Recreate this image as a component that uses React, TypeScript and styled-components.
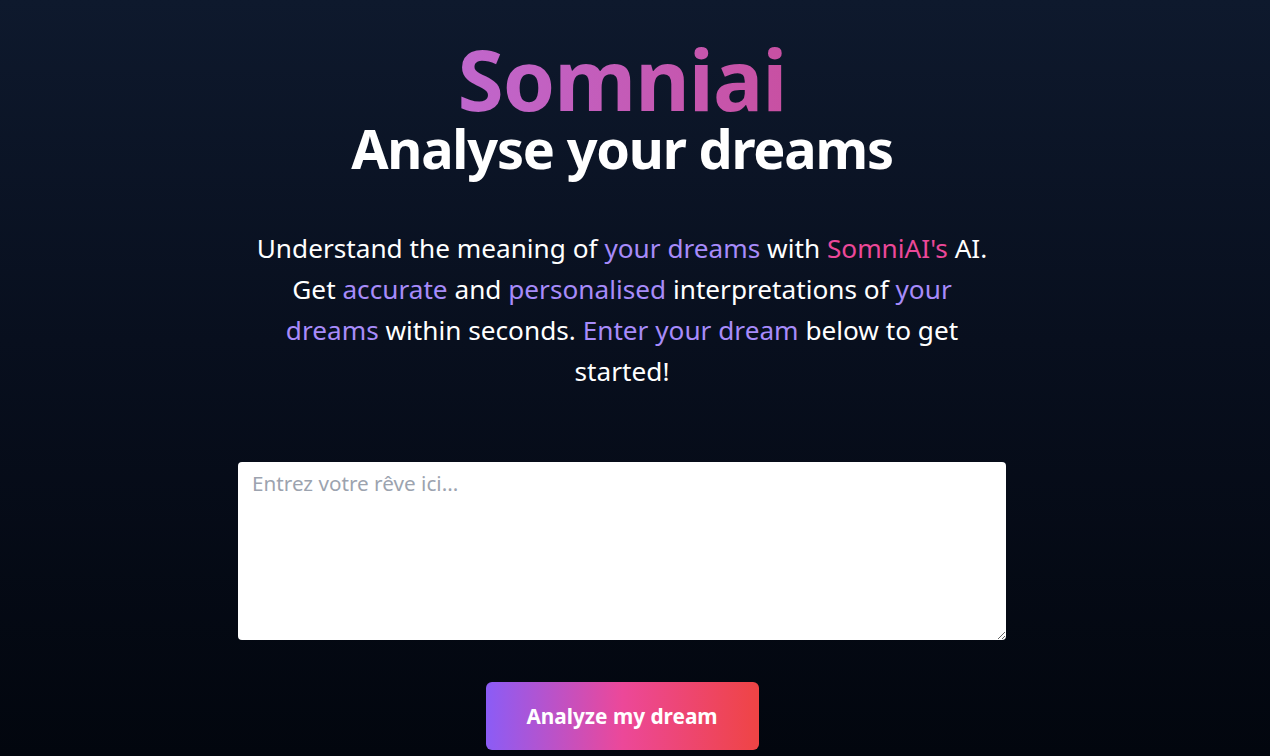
import React from "react";
import styled, { createGlobalStyle } from "styled-components";

const GlobalStyle = createGlobalStyle`
  html, body {
    margin: 0;
    padding: 0;
  }
  body {
    font-family: "Noto Sans", "Open Sans", sans-serif;
    background: #030712;
  }
  * { box-sizing: border-box; }
`;

const Page = styled.main`
  min-height: 756px;
  background: linear-gradient(to bottom, #0e192d 0%, #080f1e 45%, #02060e 100%);
  display: flex;
  flex-direction: column;
  align-items: center;
  padding: 33px 26px 0 0;
`;

const Header = styled.header`
  display: flex;
  flex-direction: column;
  align-items: center;
`;

const Title = styled.h1`
  margin: 0;
  font-size: 84px;
  line-height: 92px;
  font-weight: 700;
  letter-spacing: -1px;
  background: linear-gradient(to right, #c067cd, #c850a2);
  -webkit-background-clip: text;
  background-clip: text;
  color: transparent;
`;

const Subtitle = styled.h2`
  margin: -9px 0 0;
  font-size: 54px;
  line-height: 64px;
  font-weight: 700;
  letter-spacing: -1.2px;
  color: #ffffff;
`;

const Intro = styled.p`
  margin: 48px 0 0;
  max-width: 745px;
  text-align: center;
  font-size: 26.2px;
  line-height: 41px;
  color: #ffffff;
`;

const Accent = styled.span<{ $tone: "violet" | "pink" }>`
  color: ${(p) => (p.$tone === "pink" ? "#ec4899" : "#a78bfa")};
`;

const Form = styled.form`
  margin-top: 70px;
  display: flex;
  flex-direction: column;
  align-items: center;
  gap: 42px;
`;

const DreamInput = styled.textarea`
  width: 768px;
  height: 178px;
  border: none;
  border-radius: 4px;
  background: #ffffff;
  padding: 6px 14px;
  font-family: "Noto Sans", "Open Sans", sans-serif;
  font-size: 20.7px;
  line-height: 30px;
  color: #111827;
  outline: none;
  &::placeholder {
    color: #9ca3af;
  }
`;

const AnalyzeButton = styled.button`
  width: 273px;
  height: 68px;
  border: none;
  border-radius: 6px;
  background: linear-gradient(to right, #8b5cf6, #ec4899 50%, #ef4444);
  color: #ffffff;
  font-family: "Noto Sans", "Open Sans", sans-serif;
  font-size: 20.8px;
  font-weight: 700;
  cursor: pointer;
`;

export default function App() {
  return (
    <>
      <GlobalStyle />
      <Page>
        <Header>
          <Title>Somniai</Title>
          <Subtitle>Analyse your dreams</Subtitle>
        </Header>
        <Intro>
          Understand the meaning of <Accent $tone="violet">your dreams</Accent> with{" "}
          <Accent $tone="pink">SomniAI's</Accent> AI. Get <Accent $tone="violet">accurate</Accent> and{" "}
          <Accent $tone="violet">personalised</Accent> interpretations of{" "}
          <Accent $tone="violet">your dreams</Accent> within seconds.{" "}
          <Accent $tone="violet">Enter your dream</Accent> below to get started!
        </Intro>
        <Form onSubmit={(e) => e.preventDefault()}>
          <DreamInput placeholder="Entrez votre rêve ici..." />
          <AnalyzeButton type="submit">Analyze my dream</AnalyzeButton>
        </Form>
      </Page>
    </>
  );
}
